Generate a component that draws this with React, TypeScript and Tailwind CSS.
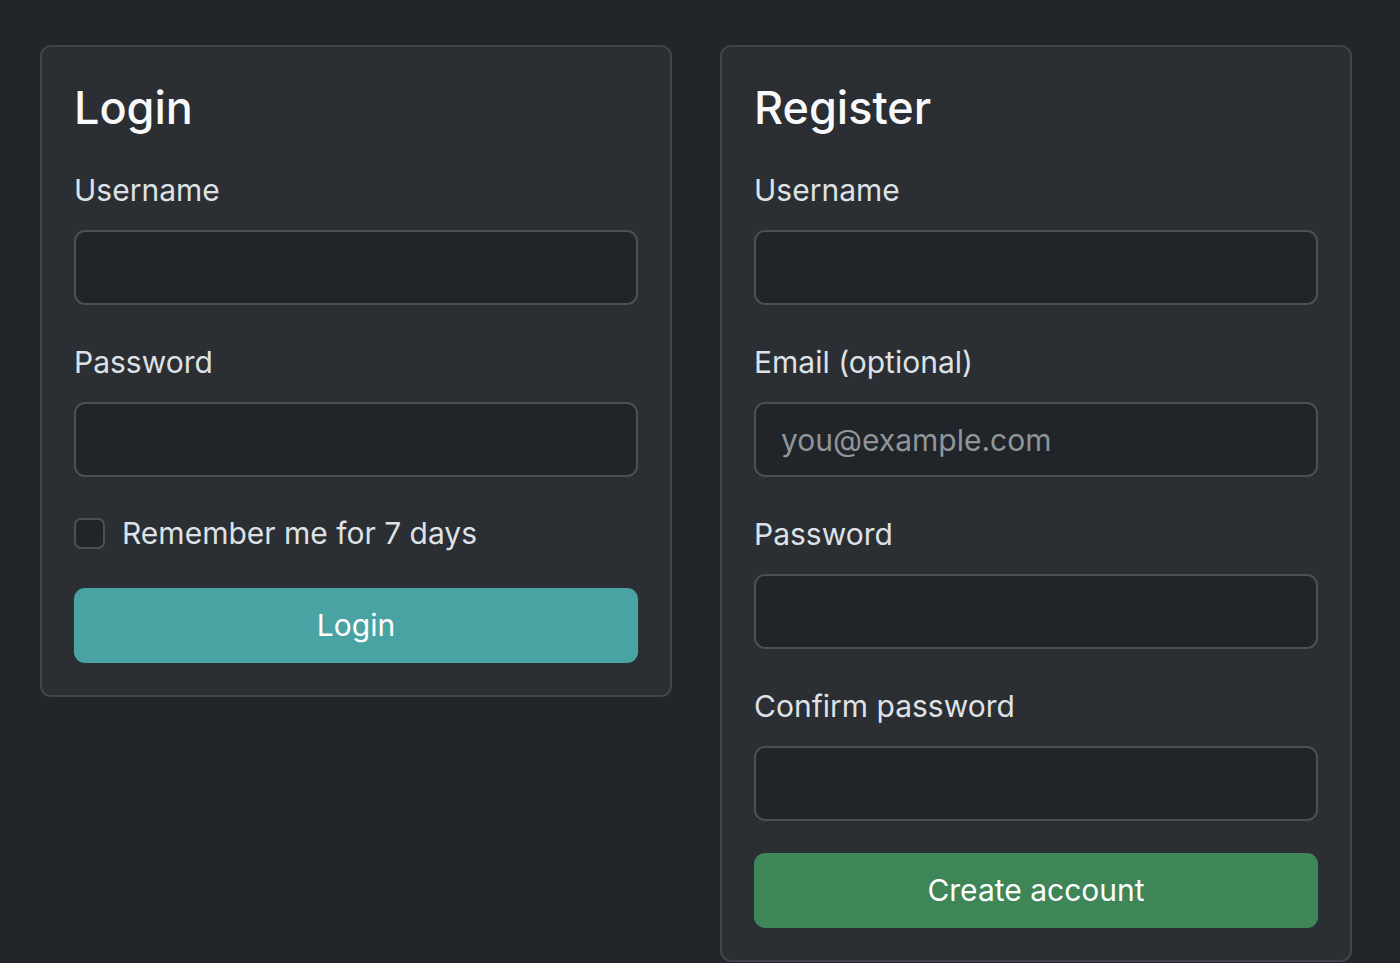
import React from "react";

const font = { fontFamily: "Inter, 'Noto Sans', sans-serif" };

function Field({ label, placeholder, type = "text", last }: { label: string; placeholder?: string; type?: string; last?: boolean }) {
  return (
    <div className={last ? "" : "mb-[37px]"}>
      <label className="block h-[40px] leading-[40px] text-[30px] text-[#dee2e6] mb-[20px]">{label}</label>
      <input
        type={type}
        placeholder={placeholder}
        className="block w-full h-[75px] rounded-[11px] border-2 border-[#495057] bg-[#212529] px-[25px] text-[30px] text-[#dee2e6] placeholder:text-[#8f959b] outline-none"
      />
    </div>
  );
}

function Card({ title, children }: { title: string; children: React.ReactNode }) {
  return (
    <div className="w-[632px] rounded-[11px] border-2 border-[#40454b] bg-[#2b2e33] px-[32px] pt-[32px] pb-[32px] self-start">
      <h3 className="h-[58px] leading-[58px] text-[45px] font-medium text-[#f8f9fa] mb-[33px]">{title}</h3>
      {children}
    </div>
  );
}

export default function App() {
  return (
    <div className="min-h-screen bg-[#222529] flex gap-[48px] pl-[40px] pt-[45px] overflow-hidden h-[963px]" style={font}>
      <Card title="Login">
        <Field label="Username" />
        <Field label="Password" type="password" />
        <div className="flex items-center gap-[17px] h-[32px] mt-[40px]">
          <span className="w-[31px] h-[31px] rounded-[7px] border-2 border-[#495057] bg-[#212529]" />
          <span className="text-[30px] text-[#dee2e6]">Remember me for 7 days</span>
        </div>
        <button className="mt-[39px] w-full h-[75px] rounded-[11px] bg-[#4aa3a3] text-[30px] text-white">Login</button>
      </Card>
      <Card title="Register">
        <Field label="Username" />
        <Field label="Email (optional)" placeholder="you@example.com" />
        <Field label="Password" type="password" />
        <Field label="Confirm password" type="password" last />
        <button className="mt-[32px] w-full h-[75px] rounded-[11px] bg-[#3e8557] text-[30px] text-white">Create account</button>
      </Card>
    </div>
  );
}
